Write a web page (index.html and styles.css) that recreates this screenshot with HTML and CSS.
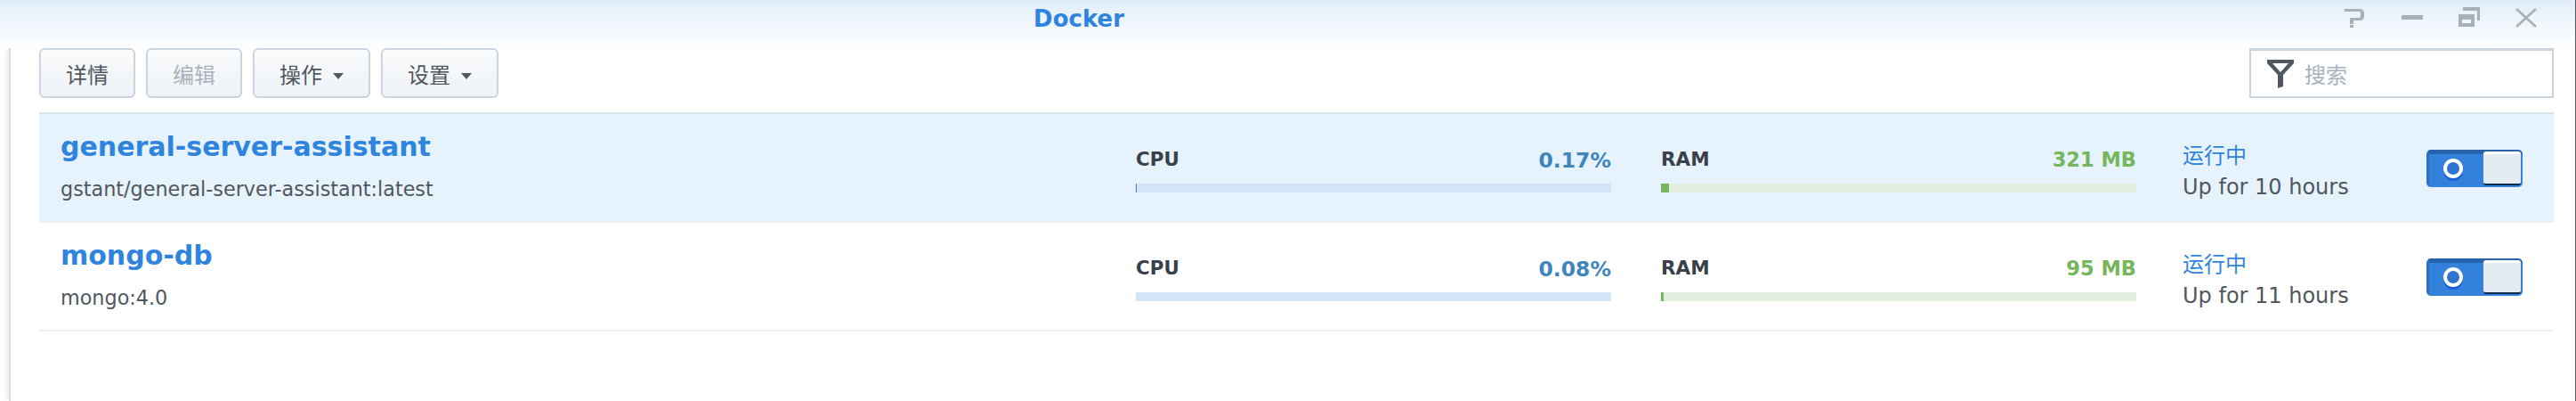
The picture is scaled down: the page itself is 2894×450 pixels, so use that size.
FILE: index.html
```html
<!DOCTYPE html>
<html lang="zh-CN">
<head>
  <meta charset="UTF-8" />
  <title>Docker</title>
  <link rel="stylesheet" href="styles.css">
</head>
<body>
  <div class="titlebar">
    <span class="title">Docker</span>
    <div class="winControls">
      <svg width="24" height="24" viewBox="0 0 24 24"><path d="M0 2h17q5 0 5 5v3q0 5-5 5H10v4H6v-7h10q2 0 2-2V7q0-2-2-2H0z M6 20h4v3H6z" fill="#a8b0b9"/></svg>
      <svg width="24" height="24" viewBox="0 0 24 24"><rect x="0" y="9" width="24" height="5" fill="#a8b0b9"/></svg>
      <svg width="24" height="24" viewBox="0 0 24 24"><path d="M5 0h19v15h-3V4H5z M0 8h18v14H0z M4 14v4h10v-4z" fill="#a8b0b9" fill-rule="evenodd"/></svg>
      <svg width="24" height="24" viewBox="0 0 24 24"><path d="M1 2l22 20M23 2L1 22" stroke="#a8b0b9" stroke-width="2.6" fill="none"/></svg>
    </div>
  </div>

  <div class="main">
    <div class="toolbar">
      <button class="btn">详情</button>
      <button class="btn disabled">编辑</button>
      <button class="btn">操作<i class="caret"></i></button>
      <button class="btn">设置<i class="caret"></i></button>
      <div class="search">
        <svg width="30" height="32" viewBox="0 0 30 32"><path d="M0 0h30v4L18 17v13l-6 2V17L0 4z M6 4l9 10 9-10z" fill="#50575f" fill-rule="evenodd"/></svg>
        <span>搜索</span>
      </div>
    </div>

    <div class="list">
      <div class="row selected">
        <div class="info">
          <div class="name">general-server-assistant</div>
          <div class="image">gstant/general-server-assistant:latest</div>
        </div>
        <div class="meter cpu">
          <div class="meterHead"><b>CPU</b><span>0.17%</span></div>
          <div class="bar"><div class="fill" style="width:1px"></div></div>
        </div>
        <div class="meter ram">
          <div class="meterHead"><b>RAM</b><span>321 MB</span></div>
          <div class="bar"><div class="fill" style="width:9px"></div></div>
        </div>
        <div class="state">
          <div class="running">运行中</div>
          <div class="uptime">Up for 10 hours</div>
        </div>
        <div class="toggle"><i class="ring"></i><i class="knob"></i></div>
      </div>

      <div class="row">
        <div class="info">
          <div class="name">mongo-db</div>
          <div class="image">mongo:4.0</div>
        </div>
        <div class="meter cpu">
          <div class="meterHead"><b>CPU</b><span>0.08%</span></div>
          <div class="bar"><div class="fill" style="width:0"></div></div>
        </div>
        <div class="meter ram">
          <div class="meterHead"><b>RAM</b><span>95 MB</span></div>
          <div class="bar"><div class="fill" style="width:3px"></div></div>
        </div>
        <div class="state">
          <div class="running">运行中</div>
          <div class="uptime">Up for 11 hours</div>
        </div>
        <div class="toggle"><i class="ring"></i><i class="knob"></i></div>
      </div>
    </div>
  </div>
</body>
</html>
```

FILE: styles.css
```css
html, body {
  height: 100%;
}
body {
  margin: 0;
  background: #fff;
  font-family: 'DejaVu Sans', 'Noto Sans CJK SC', sans-serif;
  color: #50575f;
  overflow: hidden;
  border-right: 1px solid #555;
  box-sizing: border-box;
}
.titlebar {
  height: 54px;
  background: linear-gradient(#e0eefa, #fff);
  display: flex;
  justify-content: center;
  align-items: center;
  position: relative;
  padding-right: 469px;
}
.title {
  font-size: 26px;
  font-weight: bold;
  color: #2f84df;
  margin-bottom: 12px;
}
.winControls {
  position: absolute;
  top: 8px;
  right: 43px;
  display: flex;
  gap: 40px;
}
.main {
  height: 396px;
  box-sizing: border-box;
  margin-left: 10px;
  border-left: 2px solid #d9dbde;
  box-shadow: -5px 0 5px -2px #eee;
  padding-left: 32px;
  padding-right: 24px;
}
.toolbar {
  display: flex;
  height: 56px;
  gap: 12px;
  margin-bottom: 16px;
}
.btn {
  height: 56px;
  padding: 0 28px;
  border: 2px solid #c9d4e0;
  border-radius: 6px;
  background: linear-gradient(#fafbfc, #eef2f7);
  font-family: inherit;
  font-size: 24px;
  color: #50575f;
}
.btn.disabled {
  color: #a9b1ba;
}
.caret {
  display: inline-block;
  border-left: 6px solid transparent;
  border-right: 6px solid transparent;
  border-top: 7px solid #50575f;
  margin-left: 12px;
  vertical-align: middle;
}
.search {
  margin-left: auto;
  width: 342px;
  height: 56px;
  box-sizing: border-box;
  border: 2px solid #c9d4e0;
  border-top-width: 3px;
  padding-left: 18px;
  display: flex;
  align-items: center;
  gap: 12px;
  font-size: 24px;
  color: #a9b1ba;
  background: #fff;
}
.list {
  border-top: 2px solid #d9e3ed;
}
.row {
  height: 120px;
  display: flex;
  align-items: flex-start;
  border-bottom: 2px solid #ecf0f5;
}
.row.selected {
  background: #e6f3fd;
}
.info {
  width: 1208px;
  padding: 19px 0 0 24px;
}
.name {
  font-size: 30px;
  font-weight: bold;
  color: #2f84df;
}
.image {
  font-size: 22.3px;
  margin-top: 17px;
}
.meter {
  margin-top: 38px;
}
.meter.cpu {
  width: 534px;
  margin-right: 56px;
}
.meter.ram {
  width: 534px;
  margin-right: 52px;
}
.meterHead {
  display: flex;
  justify-content: space-between;
  font-size: 23.5px;
  font-weight: bold;
  color: #3a414a;
  height: 40px;
}
.meterHead b {
  font-size: 21.5px;
}
.ram .meterHead span {
  font-size: 22.5px;
  color: #77b65b;
}
.cpu .meterHead span {
  color: #3f86bd;
}
.bar {
  height: 10px;
}
.cpu .bar {
  background: #d1e5f7;
}
.ram .bar {
  background: #e3efdf;
}
.fill {
  height: 100%;
}
.cpu .fill {
  background: #3f86bd;
}
.ram .fill {
  background: #77b65b;
}
.state {
  width: 274px;
  padding-top: 27px;
}
.running {
  font-size: 24px;
  color: #2f84df;
}
.uptime {
  font-size: 24px;
  margin-top: 6px;
}
.toggle {
  width: 108px;
  height: 42px;
  margin-top: 40px;
  box-sizing: border-box;
  border-radius: 5px;
  background: #3481dc;
  border-top: 5px solid #2a63ad;
  border-left: 3px solid #2e70c2;
  position: relative;
}
.ring {
  position: absolute;
  left: 16px;
  top: 5px;
  width: 14px;
  height: 14px;
  border: 4px solid #fff;
  border-radius: 50%;
  background: #2f74d0;
  box-shadow: 0 3px 0 #1e5fd8;
}
.knob {
  position: absolute;
  right: 2px;
  top: -3px;
  width: 42px;
  height: 38px;
  box-sizing: border-box;
  background: #e5ebf2;
  border-top: 3px solid #fff;
  border-bottom: 2px solid #0c2a4a;
  border-radius: 3px;
}
```
